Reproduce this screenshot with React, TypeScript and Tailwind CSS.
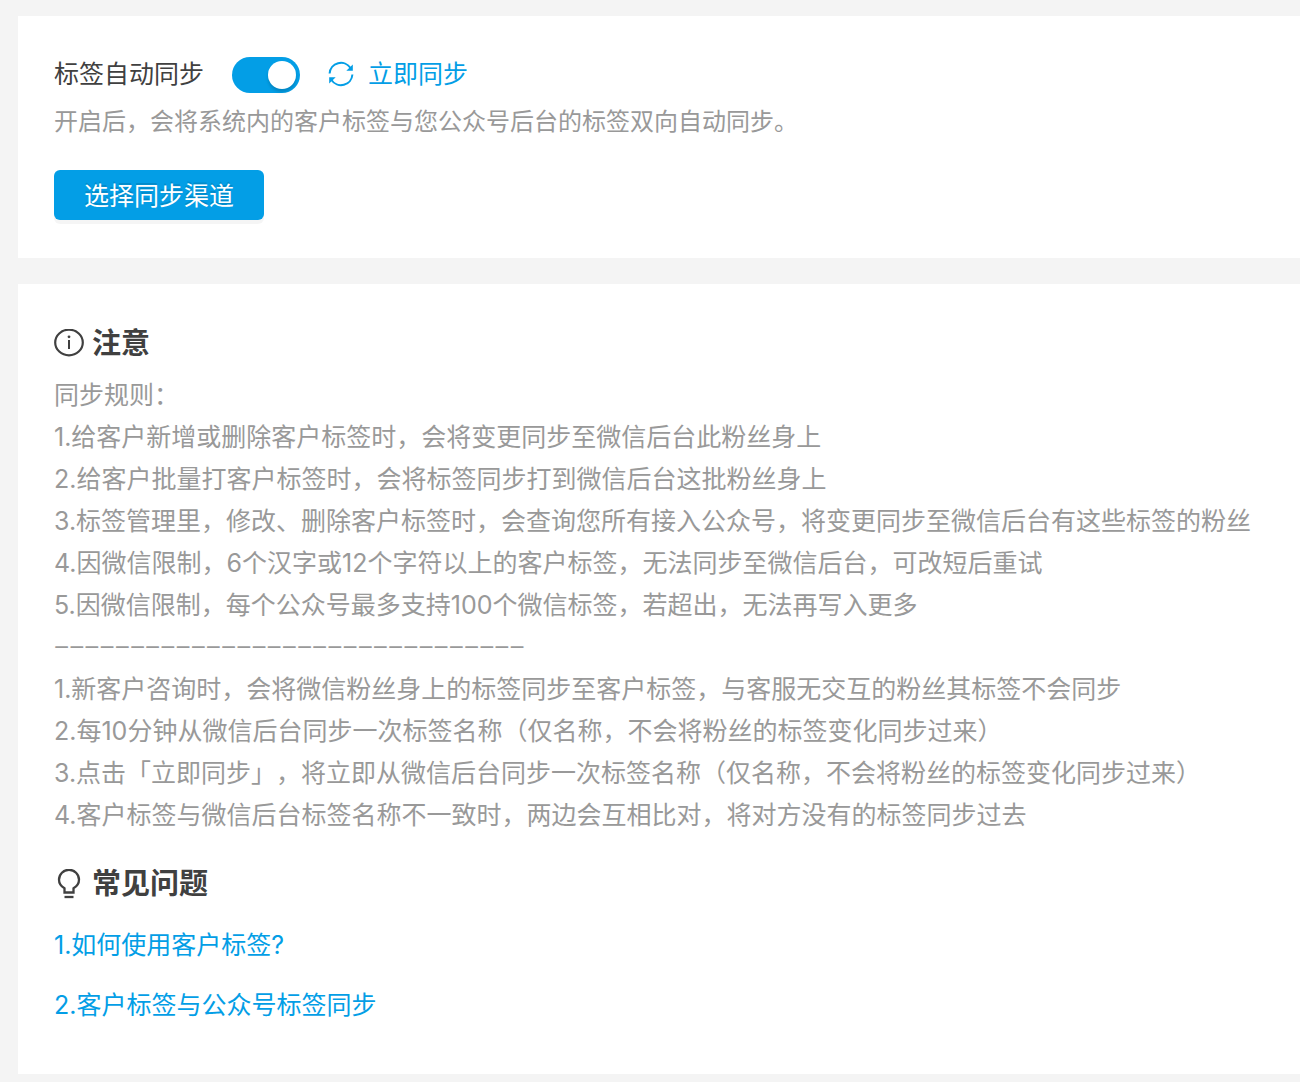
import { ReactNode, useState } from "react"

const syncRules = [
  "1.给客户新增或删除客户标签时，会将变更同步至微信后台此粉丝身上",
  "2.给客户批量打客户标签时，会将标签同步打到微信后台这批粉丝身上",
  "3.标签管理里，修改、删除客户标签时，会查询您所有接入公众号，将变更同步至微信后台有这些标签的粉丝",
  "4.因微信限制，6个汉字或12个字符以上的客户标签，无法同步至微信后台，可改短后重试",
  "5.因微信限制，每个公众号最多支持100个微信标签，若超出，无法再写入更多",
]

const autoRules = [
  "1.新客户咨询时，会将微信粉丝身上的标签同步至客户标签，与客服无交互的粉丝其标签不会同步",
  "2.每10分钟从微信后台同步一次标签名称（仅名称，不会将粉丝的标签变化同步过来）",
  "3.点击「立即同步」，将立即从微信后台同步一次标签名称（仅名称，不会将粉丝的标签变化同步过来）",
  "4.客户标签与微信后台标签名称不一致时，两边会互相比对，将对方没有的标签同步过去",
]

const faq = ["1.如何使用客户标签?", "2.客户标签与公众号标签同步"]

const SyncIcon = () => (
  <svg className="size-7" viewBox="0 0 28 28" fill="none" stroke="currentColor" strokeWidth="2">
    <path d="M2.6 12.500A11.400 11.400 0 0 1 23.500 7" />
    <path d="M25.400 13.500A11.400 11.400 0 0 1 4.500 19" />
    <path d="M25.800 3.500v6.300h-6.500z" fill="currentColor" stroke="none" />
    <path d="M2.200 22.500v-6.300h6.500z" fill="currentColor" stroke="none" />
  </svg>
)

const InfoIcon = () => (
  <svg className="size-[30px]" viewBox="0 0 30 30" fill="none" stroke="currentColor" strokeWidth="2.2">
    <ellipse cx="15" cy="13.500" rx="13.800" ry="12.800" />
    <path d="M15 11v9" strokeWidth="2" />
    <circle cx="15" cy="7.800" r="1.400" fill="currentColor" stroke="none" />
  </svg>
)

const BulbIcon = () => (
  <svg className="size-[30px]" viewBox="0 0 30 30" fill="none" stroke="currentColor" strokeWidth="2.3">
    <path d="M10.500 23.500v-4.200C7 17.300 5 14.300 5 10.800a10 10 0 0 1 20 0c0 3.500-2 6.500-5.500 8.500v4.200z" />
    <path d="M10.500 28h9" />
  </svg>
)

const SectionTitle = ({ icon, children }: { icon: ReactNode; children: ReactNode }) => (
  <h2 className="flex items-center gap-2 text-[29px] leading-[42px] font-bold text-[#404040]">
    {icon}
    {children}
  </h2>
)

export default function App() {
  const [autoSync, setAutoSync] = useState(true)

  return (
    <main className="min-h-screen space-y-[26px] bg-[#f4f4f4] pt-4 pb-2 pl-[18px] font-[Inter,'Noto_Sans_CJK_SC',sans-serif] text-[25px] [text-spacing-trim:space-all]">
      <section className="bg-white px-9 pt-[38px] pb-[38px]">
        <div className="flex h-[42px] items-center">
          <label htmlFor="auto-sync" className="text-[#404040]">
            标签自动同步
          </label>
          {/* переключатель автосинхронизации */}
          <span className="relative ml-7 h-9 w-[68px]">
            <input
              id="auto-sync"
              type="checkbox"
              role="switch"
              checked={autoSync}
              onChange={(e) => setAutoSync(e.target.checked)}
              className="peer block h-9 w-[68px] cursor-pointer appearance-none rounded-full bg-[#ccc] checked:bg-[#039ee6]"
            />
            <span className="pointer-events-none absolute top-1 left-1 size-7 rounded-full bg-white shadow-[0_3px_3px_rgba(0,0,0,0.15)] peer-checked:left-9" />
          </span>
          <button className="ml-[27px] flex items-center gap-[13px] text-[#039ee6]">
            <SyncIcon />
            立即同步
          </button>
        </div>
        <p className="mt-2 text-[24px] leading-9 text-[#999]">开启后，会将系统内的客户标签与您公众号后台的标签双向自动同步。</p>
        <button className="mt-[30px] h-[50px] w-[210px] rounded-md bg-[#039ee6] pt-1 text-white shadow-[0_4px_0_rgba(0,0,0,0.04)] [text-shadow:0_-2px_0_rgba(0,0,0,0.12)]">
          选择同步渠道
        </button>
      </section>

      <section className="bg-white px-9 py-[39px]">
        <SectionTitle icon={<InfoIcon />}>注意</SectionTitle>
        <div className="mt-[9px] leading-[42px] text-[#999]">
          <p>同步规则：</p>
          {syncRules.map((rule) => (
            <p key={rule}>{rule}</p>
          ))}
          <p className="font-['Liberation_Sans',sans-serif] text-[26px]">−−−−−−−−−−−−−−−−−−−−−−−−−−−−−−−</p>
          {autoRules.map((rule) => (
            <p key={rule}>{rule}</p>
          ))}
        </div>
        <div className="mt-[27px]">
          <SectionTitle icon={<BulbIcon />}>常见问题</SectionTitle>
        </div>
        <ul className="mt-[10px] leading-[60px]">
          {faq.map((question) => (
            <li key={question}>
              <a href="#" className="text-[#039ee6]">
                {question}
              </a>
            </li>
          ))}
        </ul>
      </section>
    </main>
  )
}
